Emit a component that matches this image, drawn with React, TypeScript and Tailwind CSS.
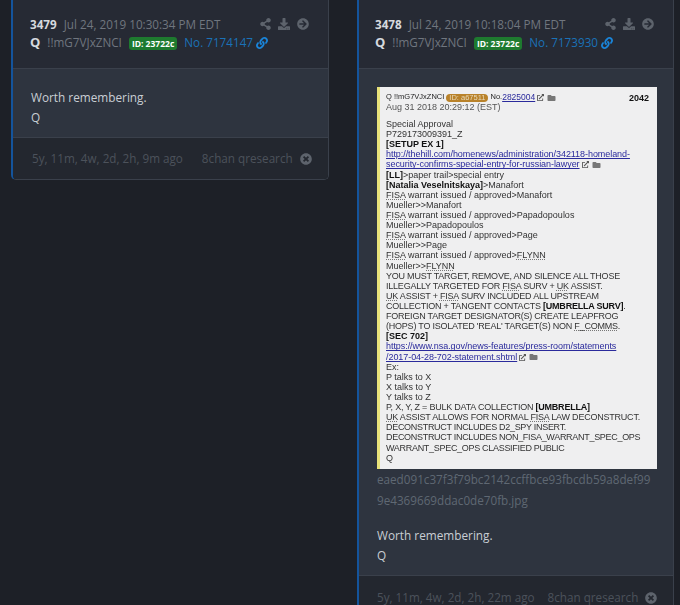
import React from "react";
import { FaShareAlt, FaDownload, FaArrowCircleRight, FaLink, FaTimesCircle, FaFolder, FaExternalLinkAlt } from "react-icons/fa";

const U = ({ children }: { children: React.ReactNode }) => (
  <span className="underline decoration-dotted decoration-[#777] underline-offset-1">{children}</span>
);
const B = ({ children }: { children: React.ReactNode }) => <b className="text-[#111]">{children}</b>;
const A = ({ children }: { children: React.ReactNode }) => <span className="text-[#2a2a9c] underline tracking-[-0.06px]">{children}</span>;
const C = ({ children }: { children: React.ReactNode }) => <span className="tracking-[-0.22px]">{children}</span>;
const D = ({ children }: { children: React.ReactNode }) => <span className="tracking-[-0.3px]">{children}</span>;
const Ext = () => (
  <span className="inline-flex items-center gap-[3px] ml-[2px] align-[-1px] text-[#555]">
    <FaExternalLinkAlt className="w-[7px] h-[7px]" />
    <FaFolder className="w-[9px] h-[8px] text-[#777]" />
  </span>
);

const lines: React.ReactNode[] = [
  "Special Approval",
  "P729173009391_Z",
  <B>[SETUP EX 1]</B>,
  <A>http://thehill.com/homenews/administration/342118-homeland-</A>,
  <><A>security-confirms-special-entry-for-russian-lawyer</A><Ext /></>,
  <><B>[LL]</B>&gt;paper trail&gt;special entry</>,
  <><B>[Natalia Veselnitskaya]</B>&gt;Manafort</>,
  <><U>FISA</U> warrant issued / approved&gt;Manafort</>,
  "Mueller>>Manafort",
  <><U>FISA</U> warrant issued / approved&gt;Papadopoulos</>,
  "Mueller>>Papadopoulos",
  <><U>FISA</U> warrant issued / approved&gt;Page</>,
  "Mueller>>Page",
  <><U>FISA</U> warrant issued / approved&gt;<U>FLYNN</U></>,
  <>Mueller&gt;&gt;<U>FLYNN</U></>,
  <C>YOU MUST TARGET, REMOVE, AND SILENCE ALL THOSE</C>,
  <C>ILLEGALLY TARGETED FOR <U>FISA</U> SURV + <U>UK</U> ASSIST.</C>,
  <C><U>UK</U> ASSIST + <U>FISA</U> SURV INCLUDED ALL UPSTREAM</C>,
  <C>COLLECTION + TANGENT CONTACTS <B>[UMBRELLA SURV]</B>.</C>,
  <C>FOREIGN TARGET DESIGNATOR(S) CREATE LEAPFROG</C>,
  <C>(HOPS) TO ISOLATED 'REAL' TARGET(S) NON <U>F_COMMS</U>.</C>,
  <B>[SEC 702]</B>,
  <A>https://www.nsa.gov/news-features/press-room/statements</A>,
  <><A>/2017-04-28-702-statement.shtml</A><Ext /></>,
  "Ex:",
  "P talks to X",
  "X talks to Y",
  "Y talks to Z",
  <C>P, X, Y, Z = BULK DATA COLLECTION <B>[UMBRELLA]</B></C>,
  <C><U>UK</U> ASSIST ALLOWS FOR NORMAL <U>FISA</U> LAW DECONSTRUCT.</C>,
  <D>DECONSTRUCT INCLUDES D2_SPY INSERT.</D>,
  <D>DECONSTRUCT INCLUDES NON_FISA_WARRANT_SPEC_OPS</D>,
  <D>WARRANT_SPEC_OPS CLASSIFIED PUBLIC</D>,
  "Q",
];

function Header({ n, date, no, right }: { n: string; date: string; no: string; right?: boolean }) {
  return (
    <div className={right ? "h-[69px] bg-[#262a34] border-b border-[#3a404b] pl-[16px] pr-[19px] pt-[15px]" : "h-[69px] bg-[#262a34] border-b border-[#3a404b] pl-[17px] pr-[19px] pt-[15px]"}>
      <div className="flex items-center h-[18px] text-[11.7px] leading-[18px] whitespace-nowrap">
        <span className="font-bold text-[#d5d9de] mr-[7px]">{n}</span>
        <span className="text-[#70767f]">{date}</span>
        <div className="ml-auto flex items-center gap-[7px] text-[#5d636c]">
          <FaShareAlt className="w-[11px] h-[12px]" />
          <FaDownload className="w-[12px] h-[12px]" />
          <FaArrowCircleRight className="w-[12px] h-[12px]" />
        </div>
      </div>
      <div className="flex items-center h-[20px] text-[11.7px] whitespace-nowrap">
        <span className="font-bold text-[13px] text-[#d5d9de] mr-[7px]">Q</span>
        <span className="text-[#70767f]">!!mG7VJxZNCI</span>
        <span className="ml-[7px] h-[13px] px-[3px] rounded-[3px] bg-[#1e7a2f] text-white text-[8.5px] font-bold leading-[13px]">ID: 23722c</span>
        <span className="ml-[7px] text-[#1a72b8] text-[11.7px]">No. {no}</span>
        <FaLink className="ml-[3px] w-[12px] h-[12px] text-[#1a84d8]" />
      </div>
    </div>
  );
}

function Footer({ age, right }: { age: string; right?: boolean }) {
  return (
    <div className={right ? "h-[44px] bg-[#23272f] border-t border-[#3a404b] pl-[18px] flex items-center text-[11.7px] text-[#4c525b] whitespace-nowrap" : "h-[42px] bg-[#23272f] border-t border-[#3a404b] pl-[19px] flex items-center text-[11.7px] text-[#4c525b] whitespace-nowrap"}>
      <span>{age}</span>
      <span className={right ? "ml-[13px]" : "ml-[19px]"}>8chan qresearch</span>
      <FaTimesCircle className="ml-[7px] w-[12px] h-[12px] text-[#5d636c]" />
    </div>
  );
}

export default function App() {
  return (
    <div className="w-[680px] h-[605px] overflow-hidden bg-[#1d2027] flex items-start" style={{ fontFamily: '"Open Sans", sans-serif' }}>
      <div className="ml-[11px] w-[318px] rounded-b-[5px] overflow-hidden border-l-2 border-l-[#14549c] border-r border-b border-r-[#3a404b] border-b-[#3a404b]">
        <Header n="3479" date="Jul 24, 2019 10:30:34 PM EDT" no="7174147" />
        <div className="h-[68px] bg-[#2e343f] pl-[18px] pt-[18px] text-[11.8px] leading-[20px] text-[#c9ced4]">
          <p>Worth remembering.</p>
          <p>Q</p>
        </div>
        <Footer age="5y, 11m, 4w, 2d, 2h, 9m ago" />
      </div>

      <div className="ml-[28px] w-[317px] border-l-2 border-l-[#14549c] border-r border-r-[#3a404b]">
        <Header n="3478" date="Jul 24, 2019 10:18:04 PM EDT" no="7173930" right />
        <div className="h-[506px] bg-[#2e343f] pl-[18px] pt-[18px]">
          <div className="w-[280px] h-[382px] bg-[#efeff0] border-l-[3px] border-l-[#e8e27a] pl-[6px] pr-[8px] pt-[6px] relative text-[#333] text-[9px] leading-[10.12px] blur-[0.35px]" style={{ fontFamily: '"Liberation Sans", sans-serif' }}>
            <div className="flex items-center h-[9px] text-[7.5px] whitespace-nowrap text-[#222]">
              <span>Q !!mG7VJxZNCI</span>
              <span className="mx-[2px] px-[3px] rounded-[4px] bg-[#b9822a] text-[#e8d9b8] h-[8px] leading-[8px]">ID: a67511</span>
              <span>No.</span>
              <span className="text-[#2a2a9c] underline text-[8.5px]">2825004</span>
              <Ext />
            </div>
            <div className="absolute right-[8px] top-[6px] text-[9px] font-bold text-[#111]">2042</div>
            <div className="h-[10px] text-[#555]">Aug 31 2018 20:29:12 (EST)</div>
            <div className="h-[7px]" />
            {lines.map((l, i) => (
              <div key={i} className="h-[10.12px] whitespace-nowrap">{l}</div>
            ))}
          </div>
          <div className="text-[11.7px] leading-[21px] text-[#5f6873] whitespace-nowrap">
            <div>eaed091c37f3f79bc2142ccffbce93fbcdb59a8def99</div>
            <div>9e4369669ddac0de70fb.jpg</div>
          </div>
          <div className="mt-[14px] text-[11.8px] leading-[20px] text-[#c9ced4]">
            <p>Worth remembering.</p>
            <p>Q</p>
          </div>
        </div>
        <Footer age="5y, 11m, 4w, 2d, 2h, 22m ago" right />
      </div>
    </div>
  );
}
